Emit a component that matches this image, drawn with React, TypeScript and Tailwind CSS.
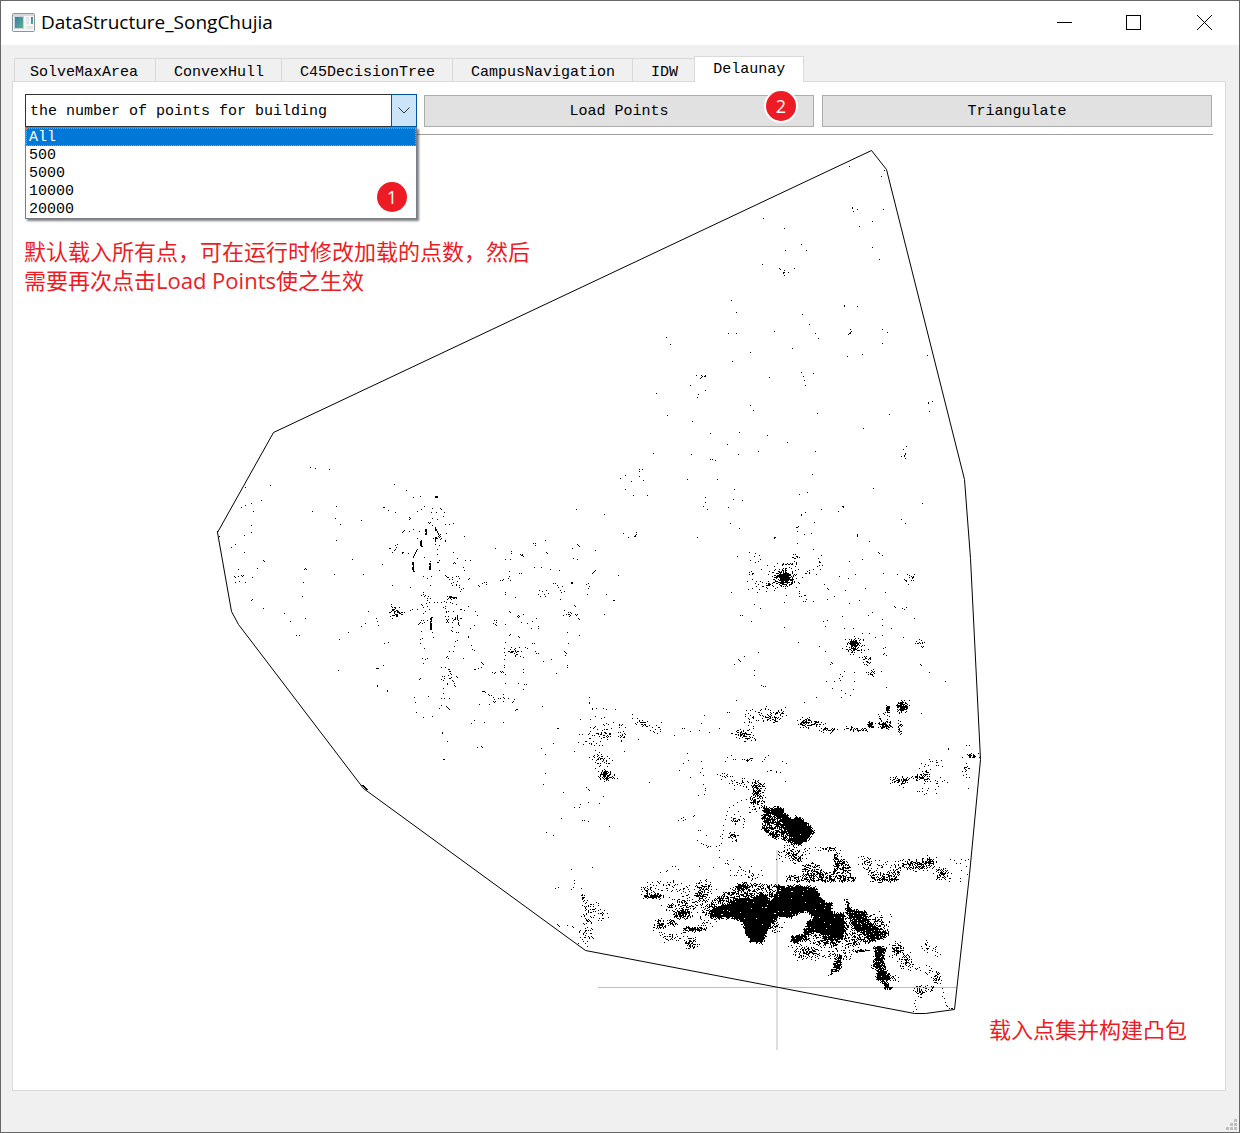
import React from "react";

/* Survey points are kept per map tile: origin of the tile, then positions in thirds of a unit. */
type Tile = { origin: [number, number]; points: string };
type Cluster = [x: number, y: number, spreadX: number, spreadY: number, count: number];
type Patch = { density: number; outline: string };
type Streak = [x1: number, y1: number, x2: number, y2: number, width: number];

const tiles: Tile[] = [
  {
    origin: [600, 140],
    points:
      "748,79 844,109 853,91 756,203 758,205 760,213 772,208 850,208 817,244 778,259 490,235 553,265 604,313 619,331 556,331 817,322 838,358 487,373 539,385 541,388 583,385 553,391 550,397 553,397 550,400 565,397 553,406 394,481 409,517 733,496 733,499 772,499 607,523 628,553 646,580 655,595 523,574 385,580 409,580 751,568 754,574 751,577 748,580 745,583 751,580 847,568 862,577 847,610 199,592 211,613 577,625 451,637 787,643 742,649 982,646 397,664 604,697 640,700 610,709 613,721 616,736 508,712 289,706 304,706 307,709 304,712 301,715 313,709 316,709 316,706 271,736 316,751 295,763 292,772 169,760 451,796 460,811 202,826 277,844 652,820 868,823 985,787 985,790 997,784 988,814 790,865 331,880 418,877 502,886 382,913 562,907 475,934 646,934 919,919 910,928 904,949 913,946 916,940 916,943 913,949 916,955 160,940 274,943 415,943 331,958 337,958 346,961 118,988 127,988 118,994 118,1009 130,1021 76,1006 61,1015 94,1024 76,1048 100,1066 142,1066 262,1018 352,1018 637,1003 403,1048 598,1063 622,1057 820,1045 967,1090 316,1072 316,1087 310,1099 322,1108 400,1078 427,1081 385,1102 664,1108 715,1114 727,1100 730,1100 730,1103 616,1117 604,1123 604,1126 643,1147 904,1138 916,1150 391,1150 418,1165 13,1123 595,1159 592,1162 589,1162 592,1174 70,1180 109,1177 109,1183 106,1186 103,1189 106,1189 85,1192 292,1192 523,1192 526,1192 523,1195 613,1183 634,1180 772,1183 772,1189",
  },
  {
    origin: [200, 440],
    points:
      "331,82 346,85 388,88 211,136 136,142 184,181 154,190 136,196 124,202 160,214 337,214 409,199 406,235 421,253 484,241 154,256 154,277 133,286 58,289 52,277 52,274 409,301 94,322 106,313 133,337 190,361 193,364 457,358 172,385 115,388 313,388 316,385 319,388 157,412 403,403 490,403 103,409 106,412 115,409 124,406 130,406 127,409 106,427 118,424 136,427 310,427 307,469 157,478 154,481 190,505 253,520 271,544 316,535 289,586 298,586 505,514 496,550 484,559 529,535 532,544 535,556 445,577 418,598 415,691 529,685 532,685 535,685 532,736 532,739",
  },
  {
    origin: [380, 480],
    points:
      "43,13 79,31 100,52 121,49 166,49 169,49 172,49 166,52 169,52 172,52 10,82 13,82 25,91 46,97 112,94 124,88 133,79 157,85 154,97 181,85 184,88 169,97 193,97 88,112 91,115 88,118 157,115 172,118 190,109 145,127 151,127 148,130 196,133 208,133 220,130 67,156 73,150 70,153 88,154 100,148 112,176 118,154 46,196 52,193 49,202 46,208 43,211 37,217 28,205 31,205 67,217 70,217 67,220 84,220 181,178 196,180 199,160 253,169 196,184 346,205 220,217 232,235 172,247 178,241 175,247 220,249 223,246 226,249 256,241 271,241 250,262 7,253 253,271 133,232 130,289 142,295 154,289 178,271 196,286 205,292 217,292 214,310 217,316 220,307 235,289 238,295 232,304 268,295 265,298 238,322 244,328 250,325 241,334 295,316 298,319 313,306 319,306 319,313 306,310 361,300 367,300 370,298 385,295 388,289 388,275 391,300 418,280 424,280 394,215 394,220 421,223 424,226 430,230 427,223 427,226 460,190 466,190 466,196 496,181 499,217 502,220 391,238 376,238 592,193 595,196 598,199 577,205 580,235 592,238 646,211 463,262 484,262 511,268 538,271 637,279 640,277 643,274 646,271 619,313 625,310 628,319 625,325 715,286 589,88 673,103 520,310 526,310 532,316 535,322 541,331 544,337 547,319 553,334 574,307 577,307 574,310 577,310 487,334 493,343 496,349 481,349 475,343 478,331 499,331 505,340 376,337 376,343 406,352 541,358 37,316 92,322 151,316 130,337 124,346 133,349 145,349 142,361 151,354 148,367 124,373 130,382 142,379 163,367 172,367 184,367 193,364 199,367 211,367 217,370 196,379 190,382 196,385 229,373 241,388 244,388 253,391 265,379 286,394 292,406 199,394 196,409 202,421 205,427 199,427 217,427 220,421 226,418 217,442 214,451 217,454 229,457 235,457 205,418 283,436 271,445 265,469 265,472 232,481 226,484 223,499 220,514 274,496 277,508 283,511 124,454 127,475 121,478 121,490 160,472 157,457 136,394 130,400 121,427 118,430 127,430 133,427 130,421 142,421 115,433 97,388 91,391 112,388 622,343 679,343 700,361 703,361 673,403 583,376 586,379 553,391 559,403 565,397 571,397 568,403 568,409 571,406 565,403 574,400 586,403 589,406 592,403 595,415 598,418 550,406 388,394 391,397 412,409 415,406 418,409 415,412 343,421 349,421 349,427 346,433 340,430 349,436 376,433 430,403 424,427 442,430 457,424 469,415 475,439 475,445 454,445 562,457 598,466 388,466 391,463 415,469 418,472 376,487 373,505 373,517 376,526 373,538 373,556 373,562 403,508 406,505 418,502 394,514 397,517 391,517 403,520 409,517 412,523 406,529 421,529 430,532 424,514 436,502 442,505 457,490 463,490 466,514 469,520 475,520 553,514 556,517 559,520 556,526 565,490 562,556 562,562 529,580 490,544 514,538 202,529 205,535 199,532 208,514 133,505 127,535 142,535 130,550 136,538 250,535 10,556 13,490 25,487 304,547 307,550 310,553 304,562 295,565 283,568 286,568 361,574 367,574 370,577 364,577 343,580 346,577 337,577 430,568 430,577 376,583 376,610 415,610 433,613 439,613 430,628 205,568 208,568 193,589 193,595 190,601 205,586 211,580 214,583 208,595 214,592 217,601 220,604 229,589 232,592 223,610 226,619 121,595 118,598 190,625 190,640 145,649 103,652 106,667 184,655 193,655 208,655 184,676 178,685 199,679 202,682 205,685 208,688 307,634 310,634 313,634 316,637 325,643 328,646 334,646 340,652 343,658 340,664 346,664 343,667 328,673 298,673 355,655 361,655 370,643 370,652 373,655 370,664 385,655 403,658 400,664 397,667 409,688 406,691 412,688 109,697 130,712 157,709 487,679 313,727 283,721 274,730 370,727 187,757 187,760 202,784 292,802 304,799 307,802 532,745 535,745 628,652 628,667 649,685 637,688 670,685 679,688 601,718 646,709 673,712 484,805 496,823 583,814 190,838 193,838",
  },
  {
    origin: [540, 690],
    points:
      "148,22 148,40 7,49 157,55 190,55 199,58 226,58 151,88 184,85 52,115 55,115 220,97 277,73 277,85 295,148 40,160 103,184 4,175 16,193 16,250 10,283 70,307 118,133 328,277 253,184 208,409 64,385 19,427 40,436 157,532 94,538 103,571 127,391 133,391 145,394 103,352 121,343 145,337 178,340 190,319 118,352 139,292 145,298 148,301 403,136 427,115 433,115 451,124 493,76 484,100 478,121 508,127 538,115 442,190 445,211 430,220 484,214 487,235 418,241 481,247 451,262 490,256 490,283 496,295 496,301 493,313 475,316 568,67 589,31 463,376 415,391 424,385 430,382 436,388 430,391 460,379 481,421 475,421 499,436 472,451 484,460 490,463 499,466 505,469 511,469 502,472 529,469 538,466 544,460 547,445 547,433 541,439 550,421 550,406 556,388 559,376 562,364 568,352 580,346 592,337 604,331 619,328 631,325 45,594 54,591 94,598 100,592 103,580 124,595 52,703 55,706 58,709 82,706 97,709 100,712 360,548 378,545 381,542 397,530 406,530 415,538 478,529 520,532 481,571 538,481 538,502 562,511 556,520 562,520 565,523 601,532 580,508 556,214 562,202 574,196 580,208 613,208 619,211 625,211 634,211 667,214 673,208 676,202 685,196 682,244 694,241 709,247",
  },
  {
    origin: [700, 740],
    points:
      "745,25 745,28 808,16 805,145 256,124 258,70 246,64 240,96 230,94 210,92 645,780 643,790 645,800 648,808 641,815 728,745 730,758 727,768 733,775 735,786 738,795 742,800 748,805 755,806 758,806 782,425 780,416 801,404 785,392 800,380 782,370 806,358 797,362 785,358 750,357 762,360 770,370",
  },
  {
    origin: [720, 520],
    points:
      "31,10 58,25 283,7 232,22 235,19 556,10 253,43 274,40 163,52 166,52 412,43 412,46 448,64 232,70 280,88 52,109 475,97 478,100 487,106 427,118 388,124 358,169 385,175 406,163 490,160 532,163 436,205 34,217 376,211 496,217 325,208 313,193 322,205 343,229 322,238 418,241 388,250 250,244 256,244 280,244 121,265 103,253 61,286 67,286 94,304 193,322 310,304 322,301 316,319 367,289 445,286 457,277 523,259 526,262 547,265 559,262 553,268 583,295 487,298 487,316 514,325 400,325 448,340 550,352 487,346 235,367 298,379 115,397 373,325 316,394 490,385 496,382 490,403 493,400 499,406 466,352 601,433 604,436 628,457 676,484 55,418 58,421 61,424 73,409 43,433 103,451 103,466 334,427 337,430 331,433 484,454 124,496 130,499 136,499 499,502 343,484 358,475 367,469 361,481 403,457 403,484 364,511 376,520 391,526 364,532 289,532 253,547 49,541 22,577 604,580 685,685 739,676",
  },
];

const clusters: { origin: [number, number]; items: Cluster[] }[] = [
  {
    origin: [380, 480],
    items: [
      [42, 395, 7, 10, 36], [62, 399, 8, 4, 16], [215, 354, 7, 5, 14], [170, 170, 8, 22, 14],
      [205, 590, 12, 12, 12], [405, 516, 10, 6, 14], [130, 370, 12, 18, 8], [225, 300, 14, 14, 8],
      [660, 765, 22, 16, 36], [655, 832, 10, 6, 12], [216, 420, 12, 14, 12],
    ],
  },
  {
    origin: [540, 690],
    items: [
      [202, 128, 5, 12, 14], [150, 140, 22, 18, 10], [190, 150, 24, 20, 10], [245, 125, 6, 15, 24],
      [310, 102, 12, 6, 35], [350, 120, 10, 8, 12], [188, 212, 12, 10, 38], [196, 257, 9, 8, 95],
      [210, 255, 14, 10, 20], [630, 90, 7, 14, 20], [700, 82, 12, 8, 50], [665, 75, 20, 12, 18],
      [605, 132, 13, 6, 65], [625, 148, 12, 7, 18], [555, 258, 10, 5, 12], [600, 280, 15, 8, 26],
      [652, 295, 9, 10, 120], [650, 330, 11, 16, 110], [585, 390, 7, 7, 24], [582, 440, 7, 7, 34],
      [610, 390, 8, 15, 8], [615, 545, 18, 12, 20], [650, 555, 12, 8, 14], [140, 735, 12, 16, 38],
      [130, 622, 5, 5, 10], [345, 618, 14, 4, 85], [325, 600, 12, 12, 45], [370, 585, 25, 10, 30],
      [430, 672, 13, 7, 170], [395, 650, 12, 5, 30], [440, 640, 20, 12, 80], [480, 620, 8, 10, 65],
      [360, 705, 10, 9, 75], [397, 700, 8, 5, 36], [458, 718, 13, 4, 120], [490, 710, 8, 6, 20],
      [455, 760, 9, 9, 65], [400, 742, 20, 6, 38], [490, 590, 15, 8, 34], [500, 660, 12, 25, 60],
      [430, 600, 25, 14, 28],
    ],
  },
  {
    origin: [700, 740],
    items: [
      [275, 340, 20, 10, 80], [292, 352, 12, 8, 60], [380, 327, 18, 3, 40], [500, 370, 10, 10, 36],
      [550, 375, 20, 8, 24], [655, 374, 24, 8, 150], [690, 366, 9, 7, 70], [728, 402, 12, 8, 85],
      [610, 375, 15, 8, 30], [325, 640, 20, 10, 110], [415, 640, 28, 8, 60], [480, 632, 16, 3, 40],
      [590, 628, 9, 10, 90], [615, 662, 10, 12, 65], [580, 715, 8, 4, 20], [640, 680, 10, 8, 14],
      [678, 620, 6, 8, 15], [708, 632, 6, 8, 10], [710, 715, 6, 8, 44], [660, 750, 8, 8, 50],
      [690, 745, 12, 6, 16], [685, 690, 5, 6, 10], [600, 122, 12, 7, 55], [617, 120, 4, 4, 24],
      [655, 115, 8, 5, 32], [680, 108, 8, 10, 38], [695, 70, 20, 8, 14], [690, 152, 18, 5, 12],
      [725, 125, 10, 6, 8], [815, 48, 10, 3, 42], [800, 90, 4, 12, 18], [135, 60, 20, 4, 10],
      [225, 560, 12, 10, 40], [15, 445, 8, 12, 30], [530, 545, 20, 14, 60], [300, 630, 14, 10, 30],
    ],
  },
  {
    origin: [720, 520],
    items: [
      [194, 174, 13, 11, 290], [188, 172, 24, 20, 100], [225, 115, 6, 8, 14], [205, 132, 10, 3, 14],
      [115, 120, 15, 12, 9], [95, 155, 6, 6, 7], [110, 200, 15, 10, 15], [145, 195, 5, 3, 16],
      [270, 155, 10, 10, 10], [298, 135, 4, 15, 10], [230, 235, 20, 10, 8], [570, 180, 7, 10, 16],
      [402, 373, 7, 7, 130], [408, 382, 16, 15, 60], [440, 425, 6, 8, 22], [458, 460, 8, 5, 18],
      [605, 372, 7, 6, 15], [548, 560, 8, 8, 150], [503, 568, 3, 5, 55], [490, 600, 12, 10, 20],
      [497, 617, 10, 6, 75], [452, 615, 6, 6, 48], [420, 630, 14, 3, 34], [390, 625, 8, 5, 12],
      [255, 608, 9, 7, 75], [290, 612, 12, 6, 34], [325, 630, 12, 4, 34], [185, 575, 7, 8, 14],
      [130, 580, 12, 10, 10], [540, 632, 5, 12, 22], [360, 500, 20, 20, 5],
    ],
  },
];

const streaks: Streak[] = [
  [425, 529, 425, 535, 2], [420, 540, 421, 546, 2], [417, 549, 413, 558, 1], [412, 562, 413, 571, 2],
  [429, 561, 429, 569, 2], [435, 527, 440, 536, 1], [435, 537, 435, 544, 1], [431, 617, 430, 629, 2],
  [457, 615, 459, 625, 1], [449, 597, 455, 597, 2], [361, 785, 366, 789, 2], [387, 690, 387, 691, 1],
];

const patches: { origin: [number, number]; items: Patch[] } = {
  origin: [700, 740],
  items: [
    { density: 0.985, outline: "187,198 215,206 232,199 252,210 265,228 278,240 290,228 318,246 345,274 325,298 300,316 278,316 272,290 262,270 245,245 215,225 187,218" },
    { density: 0.72, outline: "187,218 215,225 245,245 262,270 275,290 278,316 255,302 240,292 225,300 205,280 187,272" },
    { density: 0.5, outline: "310,375 350,365 370,398 400,395 405,335 430,355 455,385 470,426 255,426 260,408 310,405" },
    { density: 0.5, outline: "505,390 550,404 598,385 598,426 515,426" },
    { density: 0.985, outline: "28,512 70,495 110,478 160,472 190,458 215,485 235,435 260,440 290,436 345,440 365,470 375,488 395,488 398,518 436,520 436,580 412,600 385,590 372,585 335,575 305,602 290,610 272,604 275,592 310,580 322,545 345,535 318,515 300,520 270,535 240,530 225,545 205,570 190,612 150,605 140,585 125,545 95,535 50,535 30,525" },
    { density: 0.75, outline: "365,580 412,590 436,580 430,605 412,614 372,612" },
    { density: 0.42, outline: "70,460 130,428 235,435 215,485 190,465 110,482 28,512 10,500" },
    { density: 0.75, outline: "110,430 140,430 150,445 110,450" },
    { density: 0.35, outline: "20,500 60,530 60,545 20,530" },
    { density: 1, outline: "436,472 442,482 457,512 440,520" },
    { density: 0.9, outline: "440,520 455,505 480,512 500,515 505,540 550,570 570,580 545,598 505,608 490,580 465,575 450,545" },
    { density: 0.42, outline: "436,540 450,545 465,575 490,580 505,608 470,615 436,625" },
    { density: 0.3, outline: "505,520 540,535 565,570 550,570 505,540" },
    { density: 0.3, outline: "330,575 372,590 372,612 412,612 420,625 340,618 300,600" },
    { density: 0.8, outline: "408,650 428,640 425,690 400,700 385,706 400,680" },
    { density: 0.93, outline: "522,618 560,622 550,650 558,690 574,715 560,725 575,745 555,752 550,730 530,718 530,680 513,685 525,655" },
    { density: 0.13, outline: "-355,465 -330,490 -300,490 -270,540 -355,550" },
  ],
};

const hull =
  "871.5,150.5 886.5,169.5 964.5,479.5 970.5,558.5 980.5,759.5 969.5,874.5 954.5,1009.5 925.5,1013.5 914.5,1013.5 585.5,950.5 363.5,788.5 238.5,624.5 231.5,611.5 217.5,532.5 273.5,432.5";

function createRandom(seed: number) {
  let state = seed;
  return () => {
    state = (state + 0x6d2b79f5) | 0;
    let t = Math.imul(state ^ (state >>> 15), 1 | state);
    t = (t + Math.imul(t ^ (t >>> 7), 61 | t)) ^ t;
    return ((t ^ (t >>> 14)) >>> 0) / 4294967296;
  };
}

function parse(list: string) {
  return list.split(" ").map((pair) => pair.split(",").map(Number) as [number, number]);
}

function inside(x: number, y: number, ring: [number, number][]) {
  let hit = false;
  for (let i = 0, j = ring.length - 1; i < ring.length; j = i++) {
    const [xi, yi] = ring[i];
    const [xj, yj] = ring[j];
    if (yi > y !== yj > y && x < ((xj - xi) * (y - yi)) / (yj - yi) + xi) hit = !hit;
  }
  return hit;
}

function buildPointPath() {
  const random = createRandom(20);
  const cells = new Set<string>();
  const add = (x: number, y: number) => cells.add(`${Math.floor(x)} ${Math.floor(y)}`);

  for (const { origin, points } of tiles) {
    for (const [x, y] of parse(points)) add(origin[0] + x / 3, origin[1] + y / 3);
  }
  const spread = () => (random() + random() + random() - 1.5) * 2;
  for (const { origin, items } of clusters) {
    for (const [x, y, sx, sy, count] of items) {
      for (let i = 0; i < count; i++) {
        add(origin[0] + (x + spread() * sx) / 3, origin[1] + (y + spread() * sy) / 3);
      }
    }
  }
  for (const [x1, y1, x2, y2, width] of streaks) {
    const steps = Math.max(Math.abs(x2 - x1), Math.abs(y2 - y1));
    for (let i = 0; i <= steps; i++) {
      for (let w = 0; w < width; w++) {
        if (random() < 0.85) add(x1 + ((x2 - x1) * i) / steps + w, y1 + ((y2 - y1) * i) / steps);
      }
    }
  }
  const [ox, oy] = patches.origin;
  for (const { density, outline } of patches.items) {
    const ring = parse(outline).map(([x, y]) => [ox + x / 3, oy + y / 3] as [number, number]);
    const xs = ring.map((p) => p[0]);
    const ys = ring.map((p) => p[1]);
    for (let y = Math.floor(Math.min(...ys)) - 1; y <= Math.max(...ys) + 1; y++) {
      for (let x = Math.floor(Math.min(...xs)) - 1; x <= Math.max(...xs) + 1; x++) {
        const jx = (random() - 0.5) * 3;
        const jy = (random() - 0.5) * 3;
        if (inside(x + 0.5 + jx, y + 0.5 + jy, ring) && random() < density) add(x, y);
      }
    }
  }
  return Array.from(cells, (cell) => `M${cell}h1v1h-1z`).join("");
}

const pointPath = buildPointPath();

const tabs = ["SolveMaxArea", "ConvexHull", "C45DecisionTree", "CampusNavigation", "IDW", "Delaunay"];
const choices = ["All", "500", "5000", "10000", "20000"];

function AppIcon() {
  return (
    <svg width="23" height="19" viewBox="0 0 23 19" aria-hidden="true">
      <defs>
        <linearGradient id="pane" x1="0" y1="0" x2="1" y2="1">
          <stop offset="0" stopColor="#3c78a8" />
          <stop offset="1" stopColor="#5cb58a" />
        </linearGradient>
      </defs>
      <rect x="0.5" y="0.5" width="22" height="18" rx="1" fill="#f5f6f7" stroke="#8d9399" />
      <rect x="1" y="1" width="21" height="2" fill="#d5d9dc" />
      <rect x="2.5" y="3.5" width="9" height="12" fill="url(#pane)" stroke="#c9d3dc" />
      <rect x="14" y="4" width="3" height="7" fill="#e3e6e9" />
      <rect x="19" y="4" width="2" height="7" fill="url(#pane)" />
      <rect x="14" y="13" width="7" height="3" fill="#e3e6e9" />
    </svg>
  );
}

function TitleBar() {
  return (
    <header className="flex h-11 items-center bg-white pb-0.5 pl-[11px]">
      <AppIcon />
      <h1 className="ml-1.5 font-['Open_Sans','Noto_Sans',sans-serif] text-[19px] leading-6 text-black">
        DataStructure_SongChujia
      </h1>
      <div className="ml-auto flex h-full">
        <button type="button" aria-label="Minimize" className="grid w-[67px] place-items-center">
          <svg width="15" height="15" viewBox="0 0 15 15" stroke="#000" shapeRendering="crispEdges">
            <path d="M0 7.5h15" />
          </svg>
        </button>
        <button type="button" aria-label="Maximize" className="grid w-[71px] place-items-center">
          <svg width="15" height="15" viewBox="0 0 15 15" fill="none" stroke="#000" shapeRendering="crispEdges">
            <rect x="0.5" y="0.5" width="14" height="14" />
          </svg>
        </button>
        <button type="button" aria-label="Close" className="grid w-[70px] place-items-center">
          <svg width="15" height="15" viewBox="0 0 15 15" stroke="#000">
            <path d="M0 0L15 15M15 0L0 15" />
          </svg>
        </button>
      </div>
    </header>
  );
}

function TabBar() {
  return (
    <div role="tablist" className="relative z-10 -mb-px ml-0.5 flex items-end">
      {tabs.map((name, index) =>
        name === "Delaunay" ? (
          <button
            key={name}
            type="button"
            role="tab"
            aria-selected="true"
            className="-ml-px h-[26px] border border-b-0 border-[#d9d9d9] bg-white px-[18px] leading-5"
          >
            {name}
          </button>
        ) : (
          <button
            key={name}
            type="button"
            role="tab"
            aria-selected="false"
            className={`h-6 border-y border-l border-[#d9d9d9] bg-[#f0f0f0] pt-1 pr-[17px] leading-5 ${index === 0 ? "pl-[15px]" : "pl-[18px]"}`}
          >
            {name}
          </button>
        ),
      )}
    </div>
  );
}

function Badge({ children, className }: { children: React.ReactNode; className: string }) {
  return (
    <span
      className={`absolute grid size-[30px] place-items-center rounded-full bg-[#ed1c24] font-['Open_Sans','Noto_Sans',sans-serif] text-lg leading-none text-white ${className}`}
    >
      {children}
    </span>
  );
}

function PointCountBox() {
  return (
    <div className="relative">
      <select
        aria-label="the number of points for building"
        defaultValue=""
        className="block h-[33px] w-full appearance-none border border-[#333] bg-white pt-0.5 pr-8 pl-1 leading-5 outline-none"
      >
        <option value="">the number of points for building</option>
        {choices.map((choice) => (
          <option key={choice}>{choice}</option>
        ))}
      </select>
      <span className="pointer-events-none absolute inset-y-0 right-0 grid w-[26px] place-items-center border border-[#005499] bg-[#cce4f7]">
        <svg width="12" height="7" viewBox="0 0 12 7" fill="none" stroke="#333">
          <path d="M0.5 0.5L6 6L11.5 0.5" />
        </svg>
      </span>
      <ul
        role="listbox"
        aria-label="Point counts"
        className="absolute top-[33px] right-0 left-0 z-20 border border-[#7a7f87] bg-white shadow-[2px_2px_2px_rgba(0,0,0,0.5)]"
      >
        {choices.map((choice, index) => (
          <li
            key={choice}
            role="option"
            aria-selected={index === 0}
            className={
              index === 0
                ? "h-[18px] bg-[#0078d7] pl-[3px] leading-5 text-white outline-1 -outline-offset-1 outline-dotted outline-[#e8862c]"
                : "h-[18px] pl-[3px] leading-5"
            }
          >
            {choice}
          </li>
        ))}
        <li role="presentation">
          <Badge className="right-[9px] bottom-1.5">1</Badge>
        </li>
      </ul>
    </div>
  );
}

function PointMap() {
  return (
    <svg viewBox="25 135 1188 945" className="block h-auto w-full" role="img" aria-label="Point set and convex hull">
      <rect x="776" y="850" width="2" height="200" fill="#dedede" />
      <rect x="598" y="987" width="359" height="1" fill="#bdbdbd" />
      <polygon points={hull} fill="none" stroke="#000" strokeWidth="1" />
      <path d={pointPath} fill="#000" shapeRendering="crispEdges" />
    </svg>
  );
}

export default function App() {
  return (
    <div className="relative min-h-screen border border-[#666] bg-[#f0f0f0] pb-[41px] font-['Liberation_Mono',monospace] text-[15px] text-black">
      <TitleBar />
      <main className="mt-[11px] mr-[13px] ml-[11px]">
        <TabBar />
        <section className="border border-[#d9d9d9] bg-white px-3 pt-3 pb-[10px]">
          <div className="grid grid-cols-3 gap-[6px]">
            <PointCountBox />
            <button
              type="button"
              className="relative mx-px mt-px h-8 border border-[#adadad] bg-[#e1e1e1] pt-0.5 leading-5"
            >
              Load Points
              <Badge className="right-[17px] bottom-[5px] ring-2 ring-white">2</Badge>
            </button>
            <button type="button" className="mx-px mt-px h-8 border border-[#adadad] bg-[#e1e1e1] pt-0.5 leading-5">
              Triangulate
            </button>
          </div>
          <hr className="mt-[7px] border-t border-[#a0a0a0]" />
          <div className="relative font-['Open_Sans','Noto_Sans_CJK_SC',sans-serif] text-[22px] leading-[29px] text-[#ed1c24]">
            <PointMap />
            <p className="absolute top-[102px] -left-px">
              默认载入所有点，可在运行时修改加载的点数，然后
              <br />
              需要再次点击Load Points使之生效
            </p>
            <p className="absolute right-[26px] bottom-9">载入点集并构建凸包</p>
          </div>
        </section>
      </main>
      <svg className="absolute right-0.5 bottom-0.5" width="11" height="11" viewBox="0 0 11 11" fill="#bfbfbf" aria-hidden="true">
        <path d="M8 0h3v3H8zM4 4h3v3H4zM8 4h3v3H8zM0 8h3v3H0zM4 8h3v3H4zM8 8h3v3H8z" />
      </svg>
    </div>
  );
}
